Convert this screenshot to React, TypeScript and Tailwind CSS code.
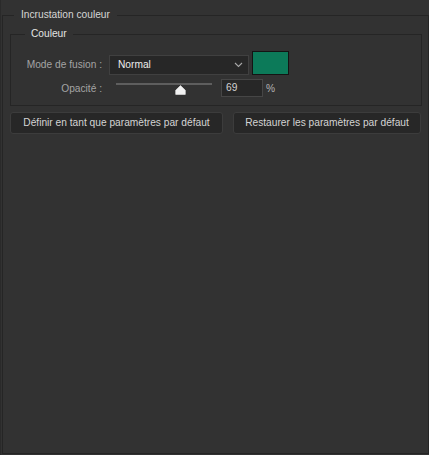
import React from "react";

export default function App() {
  return (
    <div
      className="w-[429px] h-[455px] bg-[#323232] pt-[7px] border-l border-[#2a2a2a] text-[10.2px] leading-[16px] overflow-hidden"
      style={{ fontFamily: '"Liberation Sans", Arial, sans-serif' }}
    >
      <fieldset className="ml-[1px] w-[427px] h-[447px] border border-[#252525] pl-[7px]">
        <legend className="ml-[4px] px-[7px] text-[#d6d6d6] leading-[16px]">
          Incrustation couleur
        </legend>
        <fieldset className="mt-[3px] w-[412px] border border-[#252525] pb-[8px]">
          <legend className="ml-[14px] px-[6px] text-[#e4e4e4] leading-[16px]">
            Couleur
          </legend>
          <div className="mt-[9px] flex items-end">
            <div className="w-[91px] h-[20px] flex items-center justify-end text-[#a4a4a4]">
              Mode de fusion :
            </div>
            <div className="ml-[7px] w-[140px] h-[20px] bg-[#272727] border border-[#404040] flex items-center justify-between pl-[8px] pr-[5px] text-[#ececec]">
              <span>Normal</span>
              <svg width="9" height="6" viewBox="0 0 9 6">
                <polyline points="1,1 4.5,4.5 8,1" fill="none" stroke="#a8a8a8" strokeWidth="1.1" />
              </svg>
            </div>
            <div className="ml-[3px] w-[37px] h-[24px] bg-[#0c7a59] border border-[#141414]" />
          </div>
          <div className="mt-[4px] flex items-start h-[18px]">
            <div className="w-[91px] h-[18px] flex items-center justify-end text-[#a4a4a4] pt-[2px]">
              Opacité :
            </div>
            <div className="ml-[7px] w-[112px] h-[18px] relative">
              <div className="absolute left-[7px] top-[4px] w-[96px] h-[2px] bg-[#5e5e5e]" />
              <svg
                width="11"
                height="10"
                viewBox="0 0 11 10"
                className="absolute left-[66px] top-[6px]"
              >
                <path
                  d="M5.5 0.6 L10.3 5.2 L10.3 9.4 L0.7 9.4 L0.7 5.2 Z"
                  fill="#f2f2f2"
                  stroke="#f2f2f2"
                  strokeWidth="0.6"
                  strokeLinejoin="round"
                />
              </svg>
            </div>
            <div className="w-[42px] h-[18px] bg-[#272727] border border-[#464646] flex items-center pl-[4px] text-[#d2d2d2]">
              69
            </div>
            <div className="ml-[3px] h-[18px] flex items-center text-[#b4b4b4] pt-[2px]">%</div>
          </div>
        </fieldset>
        <div className="mt-[6px] flex gap-[10px]">
          <button className="w-[213px] h-[22px] bg-[#272727] border border-[#3c3c3c] rounded-[3px] text-[#d4d4d4] flex items-center justify-center">
            Définir en tant que paramètres par défaut
          </button>
          <button className="w-[188px] h-[22px] bg-[#272727] border border-[#3c3c3c] rounded-[3px] text-[#d4d4d4] flex items-center justify-center">
            Restaurer les paramètres par défaut
          </button>
        </div>
      </fieldset>
    </div>
  );
}
